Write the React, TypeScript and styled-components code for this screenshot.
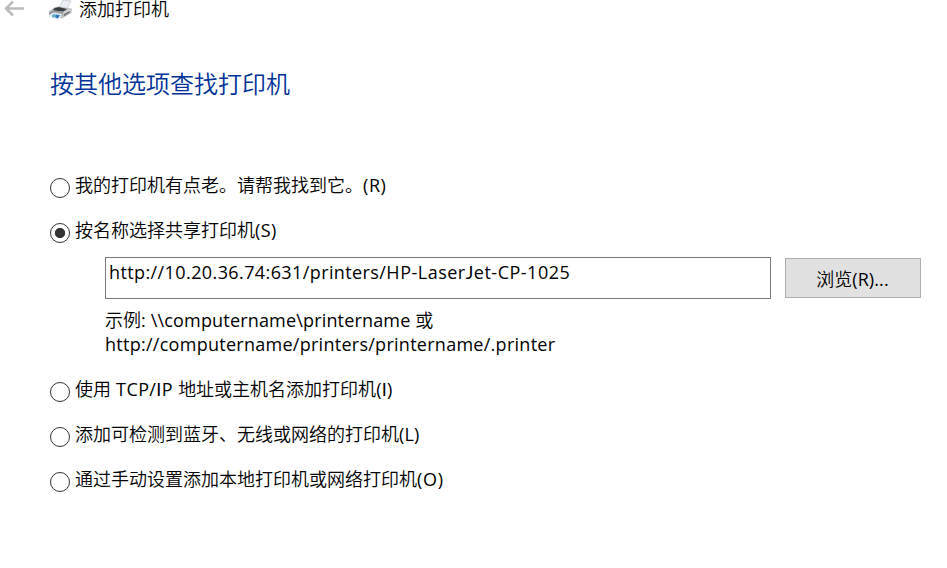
import React, { useState } from "react";
import styled, { createGlobalStyle } from "styled-components";

const GlobalStyle = createGlobalStyle`
  *, *::before, *::after { box-sizing: border-box; }
  body {
    margin: 0;
    background: #fff;
    color: #000;
    font-family: "Noto Sans CJK SC", sans-serif;
    font-size: 18px;
    font-weight: 350;
    line-height: 24px;
  }
`;

const Wizard = styled.main`
  width: 947px;
  height: 568px;
  overflow: hidden;
  background: #fff;
  white-space: nowrap;
`;

const TitleBar = styled.header`
  display: flex;
  align-items: center;
  height: 20px;
  padding-left: 4px;
`;

const Title = styled.span`
  height: 20px;
  line-height: 17px;
`;

const BackArrow = styled.svg`
  width: 21px;
  height: 20px;
  margin-right: 23px;
  flex: none;
`;

const PrinterIcon = styled.svg`
  width: 25px;
  height: 20px;
  margin-right: 6px;
  flex: none;
`;

const Heading = styled.h1`
  margin: 45px 0 0 50px;
  color: #003399;
  font-size: 24px;
  font-weight: 350;
  line-height: 36px;
`;

const Options = styled.form`
  margin: 72px 26px 0 50px;
`;

const Option = styled.label<{ $gap?: number }>`
  display: flex;
  height: 24px;
  margin-bottom: ${(p) => p.$gap ?? 21}px;
`;

const Radio = styled.input`
  appearance: none;
  flex: none;
  width: 20px;
  height: 20px;
  margin: 5px 5px 0 0;
  border: 1px solid #333;
  border-radius: 50%;
  background: #fff;

  &:checked {
    background: radial-gradient(circle, #333 4.7px, #fff 5.5px);
  }
`;

const Latin = styled.span<{ $track?: number }>`
  font-family: "Open Sans", "Noto Sans", sans-serif;
  font-weight: 400;
  letter-spacing: ${(p) => p.$track ?? 0}px;
  line-height: 20px;
  white-space: pre;
`;

/* Capitals drawn without slab serifs or a descending hook. */
const PlainCap = styled.span`
  font-family: Lato, sans-serif;
  line-height: 20px;
`;

const PathRow = styled.div`
  display: flex;
  align-items: center;
  justify-content: space-between;
  margin-left: 55px;
`;

const PathField = styled.div`
  width: 666px;
  height: 42px;
  padding: 1px 3px;
  border: 1px solid #7a7a7a;
  background: #fff;
`;

const BrowseButton = styled.button`
  width: 136px;
  height: 40px;
  padding: 0 1px 1px 0;
  border: 1px solid #adadad;
  background: #e1e1e1;
  color: #000;
  font: inherit;
`;

const Example = styled.div`
  margin: 8px 0 22px 55px;
`;

const ExampleLine = styled.div`
  height: 24px;
`;

const OptionText = styled.span`
  height: 24px;
  line-height: 22px;
`;

type Choice = { id: string; label: React.ReactNode };

const shared: Choice = {
  id: "shared",
  label: <>按名称选择共享打印机<Latin $track={0.4}>(S)</Latin></>,
};

const older: Choice = {
  id: "older",
  label: <>我的打印机有点老。请帮我找到它。<Latin $track={0.6}>(R)</Latin></>,
};

const others: Choice[] = [
  {
    id: "tcp",
    label: (
      <>
        使用<Latin $track={0.4}> TCP/<PlainCap>I</PlainCap>P </Latin>
        地址或主机名添加打印机<Latin $track={0.3}>(<PlainCap>I</PlainCap>)</Latin>
      </>
    ),
  },
  { id: "wireless", label: <>添加可检测到蓝牙、无线或网络的打印机<Latin $track={0.2}>(L)</Latin></> },
  { id: "manual", label: <>通过手动设置添加本地打印机或网络打印机<Latin $track={0.7}>(O)</Latin></> },
];

export default function App() {
  const [selected, setSelected] = useState("shared");

  const renderOption = (choice: Choice, gap?: number) => (
    <Option key={choice.id} $gap={gap}>
      <Radio
        type="radio"
        name="method"
        checked={selected === choice.id}
        onChange={() => setSelected(choice.id)}
      />
      <OptionText>{choice.label}</OptionText>
    </Option>
  );

  return (
    <Wizard>
      <GlobalStyle />
      <TitleBar>
        <BackArrow viewBox="0 0 21 20" fill="none" stroke="#bcbcbc" strokeWidth="2.5">
          <path d="M20 8.5H2.5M9 1.5L2 8.5L9 15.5" />
        </BackArrow>
        <PrinterIcon viewBox="0 0 25 20">
          <path d="M11 8L15 0L23 1L19 9Z" fill="#f1f4f7" stroke="#b5bbc1" strokeWidth=".7" />
          <path d="M15.500 2L21 3M14.500 4L20 5M13.500 6L19 7" stroke="#dbe3ea" strokeWidth=".7" />
          <path d="M1 11L7 7L11 6.500L20 8L24 8.500L23.500 13L14 18.500L1 16Z" fill="#c0c2c4" />
          <path d="M6 8.500L10.500 7L19 9L15.500 11.500L5 10.500Z" fill="#3b3e40" />
          <path d="M1 12.500L5 10.500L15.500 11.500L14 16L1 15Z" fill="#989b9e" />
          <path d="M16 11.500L23 8.500L23.500 12L15 17Z" fill="#d0d2d4" />
          <path d="M16 14L22 11V12.500L15.500 16.500Z" fill="#6d7174" />
          <path d="M1 15L6 12.500L14 14L11 19.500L1 17.500Z" fill="#e9f1f5" />
          <path d="M3.500 15.500L7 13.500L8 16L5 18Z" fill="#58aae5" />
          <path d="M8 14.500L12 15L10 18.500L7 17.500Z" fill="#2d75bc" />
          <path d="M5 16L7 15V17Z" fill="#70b87a" />
        </PrinterIcon>
        <Title>添加打印机</Title>
      </TitleBar>
      <Heading>按其他选项查找打印机</Heading>
      <Options>
        {renderOption(older)}
        {renderOption(shared, 15)}
        <PathRow>
          <PathField>
            <Latin $track={0.4}>http://10.20.36.74:631/printers/</Latin>
            <Latin $track={0.5}>HP-Laser<PlainCap>J</PlainCap>et-CP-1025</Latin>
          </PathField>
          <BrowseButton type="button">浏览<Latin $track={0.1}>(R)...</Latin></BrowseButton>
        </PathRow>
        <Example>
          <ExampleLine>
            示例<Latin $track={0.17}>: \\computername\printername </Latin>或
          </ExampleLine>
          <ExampleLine>
            <Latin $track={0.27}>http://computername/printers/printername/.printer</Latin>
          </ExampleLine>
        </Example>
        {others.map((choice) => renderOption(choice))}
      </Options>
    </Wizard>
  );
}
